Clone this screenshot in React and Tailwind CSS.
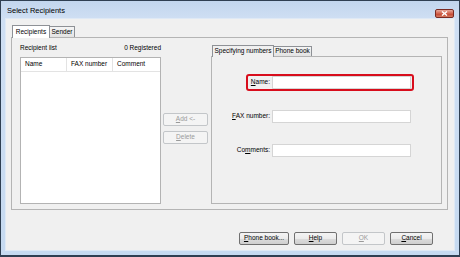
import React from 'react';

const font = { fontFamily: '"Liberation Sans", Arial, sans-serif' };

function Btn({ children, disabled, className = '' }) {
  return (
    <div
      className={`flex items-center justify-center h-[13px] rounded-[2px] border text-[6.5px] leading-none ${
        disabled
          ? 'border-[#c3c6c9] bg-[#f4f4f4] text-[#9a9a9a]'
          : 'border-[#707070] bg-[linear-gradient(#f4f4f4_0%,#ebebeb_50%,#dcdcdc_51%,#cfcfcf_100%)] text-black'
      } ${className}`}
    >
      {children}
    </div>
  );
}

function Field({ label, highlight }) {
  return (
    <div className="flex items-center">
      <div className="w-[60px] pr-[2px] text-right text-[6.5px] leading-none whitespace-nowrap">{label}</div>
      <div className="relative">
        <div className="w-[139px] h-[13px] bg-white border border-[#d5d5d5]" />
        {highlight && (
          <div className="absolute left-[-26px] right-[-3px] top-[-2px] bottom-[-2px] rounded-[3px] border-2 border-[#d80d1c]" />
        )}
      </div>
    </div>
  );
}

export default function App() {
  return (
    <div style={font} className="w-[460px] h-[257px] bg-[#2f3f52] p-[1px] pb-[2px] overflow-hidden">
      <div className="w-full h-full flex flex-col bg-[linear-gradient(#c2d6ee,#cfdff3_18px,#c6daf1)]">
        {/* title bar */}
        <div className="h-[17px] flex items-end justify-between pl-[6px] pr-[5px]">
          <span className="text-[7.5px] leading-none text-black mb-[4px]">Select Recipients</span>
          <div className="w-[19px] h-[9px] rounded-[2px] border border-[#7a2a22] bg-[linear-gradient(#e9a99c,#d0614c_50%,#c2402c_51%,#d47b62)] flex items-center justify-center">
            <svg width="7" height="5" viewBox="0 0 7 5">
              <path d="M1 0.5 L6 4.5 M6 0.5 L1 4.5" stroke="#fff" strokeWidth="1.4" />
            </svg>
          </div>
        </div>

        {/* client area */}
        <div className="flex-1 mx-[4px] mb-[4px] border border-[#dfe9f5] bg-[#f0f0f0] flex flex-col pl-[5px] pr-[6px] pt-[5px] pb-[5px]">
          {/* outer tabs */}
          <div className="flex items-end h-[13px] pl-[1px] text-[6.5px] leading-none">
            <div className="w-[38px] h-[13px] bg-white border border-b-0 border-[#8e9196] flex items-center justify-center relative top-[1px] z-10">
              Recipients
            </div>
            <div className="w-[25px] h-[11px] bg-[linear-gradient(#f5f5f5,#e3e3e3)] border border-b-0 border-l-0 border-[#8e9196] flex items-center justify-center">
              Sender
            </div>
          </div>

          {/* outer panel */}
          <div className="h-[173px] border border-[#b4b4b4] bg-[#f0f0f0] flex pl-[8px] pr-[5px] pb-[5px]">
            {/* recipient list */}
            <div className="w-[141px] flex flex-col">
              <div className="h-[19px] flex items-center justify-between text-[6.5px] leading-none pt-[1px]">
                <span>Recipient list</span>
                <span>0 Registered</span>
              </div>
              <div className="flex-1 bg-white border border-[#b3b3b3] flex flex-col">
                <div className="h-[14px] flex border-b border-[#e3e3e3] text-[6.5px] leading-none">
                  <div className="w-[46px] border-r border-[#e3e3e3] flex items-center pl-[4px]">Name</div>
                  <div className="w-[46px] border-r border-[#e3e3e3] flex items-center pl-[4px]">FAX number</div>
                  <div className="flex-1 flex items-center pl-[4px]">Comment</div>
                </div>
              </div>
            </div>

            {/* add / delete */}
            <div className="w-[45px] ml-[2px] flex flex-col gap-[5px] pt-[75px]">
              <Btn disabled><span><u>A</u>dd &lt;-</span></Btn>
              <Btn disabled><span><u>D</u>elete</span></Btn>
            </div>

            {/* specifying numbers */}
            <div className="flex-1 ml-[3px] flex flex-col pt-[6px]">
              <div className="flex items-end h-[12px] pl-[1px] text-[6.5px] leading-none">
                <div className="w-[62px] h-[12px] bg-[#f0f0f0] border border-b-0 border-[#8e9196] flex items-center justify-center relative top-[1px] z-10">
                  Specifying numbers
                </div>
                <div className="w-[38px] h-[10px] bg-[linear-gradient(#f5f5f5,#e3e3e3)] border border-b-0 border-l-0 border-[#8e9196] flex items-center justify-center">
                  Phone book
                </div>
              </div>
              <div className="flex-1 border border-[#b4b4b4] flex flex-col gap-[21px] pt-[19px]">
                <Field highlight label={<span><u>N</u>ame:</span>} />
                <Field label={<span><u>F</u>AX number:</span>} />
                <Field label={<span>Co<u>m</u>ments:</span>} />
              </div>
            </div>
          </div>

          {/* bottom buttons */}
          <div className="mt-[22px] flex justify-end gap-[5px] pr-[15px]">
            <Btn className="w-[50px]"><span><u>P</u>hone book...</span></Btn>
            <Btn className="w-[43px]"><span><u>H</u>elp</span></Btn>
            <Btn disabled className="w-[43px]"><span><u>O</u>K</span></Btn>
            <Btn className="w-[43px]"><span><u>C</u>ancel</span></Btn>
          </div>
        </div>
      </div>
    </div>
  );
}
